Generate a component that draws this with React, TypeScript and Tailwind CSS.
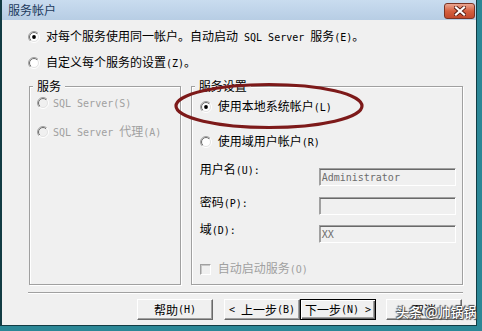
import React from "react";

function T({ s }: { s: string }) {
  const parts = s.match(/[\x00-\x7f]+|[^\x00-\x7f]+/g) || [];
  return (
    <>
      {parts.map((p, i) =>
        /[\x00-\x7f]/.test(p[0]) ? (
          <span key={i} className="font-['DejaVu_Sans_Mono',monospace] text-[10px]">
            {p}
          </span>
        ) : (
          <span key={i}>{p}</span>
        )
      )}
    </>
  );
}

function Radio({ checked, disabled }: { checked?: boolean; disabled?: boolean }) {
  return (
    <svg width="12" height="12" viewBox="0 0 12 12" className="shrink-0">
      <defs>
        <linearGradient id="rOuter" x1="0" y1="0" x2="1" y2="1">
          <stop offset="0.5" stopColor="#a0a0a0" />
          <stop offset="0.5" stopColor="#ffffff" />
        </linearGradient>
        <linearGradient id="rInner" x1="0" y1="0" x2="1" y2="1">
          <stop offset="0.5" stopColor="#696969" />
          <stop offset="0.5" stopColor="#e3e3e3" />
        </linearGradient>
      </defs>
      <circle cx="6" cy="6" r="5.5" fill="none" stroke="url(#rOuter)" strokeWidth="1" />
      <circle cx="6" cy="6" r="4.5" fill={disabled ? "#f0f0f0" : "#ffffff"} stroke="url(#rInner)" strokeWidth="1" />
      {checked && <circle cx="6" cy="6" r="1.9" fill="#000" />}
    </svg>
  );
}

function Btn({ label, def }: { label: React.ReactNode; def?: boolean }) {
  return (
    <div
      className={
        def
          ? "w-[76px] h-[21px] bg-[#f0f0f0] border border-black shadow-[inset_1px_1px_0_#fff,inset_-1px_-1px_0_#696969,inset_-2px_-2px_0_#a0a0a0] flex items-center justify-center whitespace-pre"
          : "w-[76px] h-[21px] bg-[#f0f0f0] border border-t-white border-l-white border-r-[#696969] border-b-[#696969] shadow-[inset_-1px_-1px_0_#a0a0a0] flex items-center justify-center whitespace-pre"
      }
    >
      {label}
    </div>
  );
}

function Box({ text }: { text?: string }) {
  return (
    <div className="w-[137px] h-[18px] bg-[#f0f0f0] border border-t-[#a0a0a0] border-l-[#a0a0a0] border-r-white border-b-white shadow-[inset_0_1px_0_#696969,inset_1px_0_0_#a0a0a0] flex items-center pl-[2px] pt-[1px] font-['DejaVu_Sans_Mono',monospace] text-[10px] text-[#6d6d6d]">
      {text}
    </div>
  );
}

export default function App() {
  return (
    <div className="w-[482px] h-[331px] bg-[#2b8796] relative overflow-hidden font-['Noto_Sans_CJK_SC',sans-serif] text-[12px] leading-[14px] text-black">
      <div className="w-[477px] h-[326px] border-l-2 border-r border-b border-[#123c44] bg-[#f0f0f0] flex flex-col">
        {/* title bar */}
        <div className="h-[20px] shrink-0 flex items-center justify-between pl-[6px] pr-[1px] bg-gradient-to-b from-[#c9dcef] to-[#b7cde4]">
          <span className="text-[#1d3a5c] text-[12px] leading-[14px]">服务帐户</span>
          <div className="w-[31px] h-[16px] mt-[1px] rounded-[3px] border border-[#7a3424] bg-gradient-to-b from-[#eaa591] via-[#d5603f] to-[#c2492c] flex items-center justify-center">
            <svg width="12" height="10" viewBox="0 0 12 10">
              <path d="M2 1.5 L10 8.5 M10 1.5 L2 8.5" stroke="#5a1e14" strokeWidth="4" strokeLinecap="square" />
              <path d="M2 1.5 L10 8.5 M10 1.5 L2 8.5" stroke="#ffffff" strokeWidth="2.2" strokeLinecap="square" />
            </svg>
          </div>
        </div>

        {/* content */}
        <div className="flex-1 flex flex-col pl-[27px] pr-[13px]">
          <div className="mt-[9px] h-[16px] flex items-center gap-[6px] -ml-[1px] whitespace-pre">
            <Radio checked />
            <span>
              <T s="对每个服务使用同一帐户。自动启动 SQL Server 服务(E)。" />
            </span>
          </div>
          <div className="mt-[10px] h-[16px] flex items-center gap-[6px] -ml-[1px] whitespace-pre">
            <Radio />
            <span>
              <T s="自定义每个服务的设置(Z)。" />
            </span>
          </div>

          <div className="mt-[8px] flex gap-[10px]">
            <fieldset className="w-[152px] h-[206px] min-w-0 border border-[#a0a0a0] shadow-[inset_1px_1px_0_#fff,1px_1px_0_#fff] p-0 m-0">
              <legend className="ml-[3px] px-[4px] bg-[#f0f0f0]">服务</legend>
              <div className="pl-[7px] flex flex-col text-[#a0a0a0] whitespace-pre">
                <div className="mt-[2px] h-[16px] flex items-center gap-[4px]">
                  <Radio disabled />
                  <span>
                    <T s="SQL Server(S)" />
                  </span>
                </div>
                <div className="mt-[13px] h-[16px] flex items-center gap-[4px]">
                  <Radio disabled />
                  <span>
                    <T s="SQL Server 代理(A)" />
                  </span>
                </div>
              </div>
            </fieldset>

            <fieldset className="w-[273px] h-[206px] min-w-0 border border-[#a0a0a0] shadow-[inset_1px_1px_0_#fff,1px_1px_0_#fff] p-0 m-0">
              <legend className="ml-[3px] px-[4px] bg-[#f0f0f0]">服务设置</legend>
              <div className="pl-[8px] flex flex-col whitespace-pre">
                <div className="mt-[6px] h-[16px] flex items-center gap-[6px]">
                  <Radio checked />
                  <span>
                    <T s="使用本地系统帐户(L)" />
                  </span>
                </div>
                <div className="mt-[19px] h-[16px] flex items-center gap-[6px]">
                  <Radio />
                  <span>
                    <T s="使用域用户帐户(R)" />
                  </span>
                </div>

                <div className="mt-[18px] flex items-start">
                  <span className="w-[119px] -mt-[6px]">
                    <T s="用户名(U):" />
                  </span>
                  <Box text="Administrator" />
                </div>
                <div className="mt-[11px] flex items-start">
                  <span className="w-[119px] -mt-[2px]">
                    <T s="密码(P):" />
                  </span>
                  <Box />
                </div>
                <div className="mt-[10px] flex items-start">
                  <span className="w-[119px] -mt-[3px]">
                    <T s="域(D):" />
                  </span>
                  <Box text="XX" />
                </div>

                <div className="mt-[18px] h-[16px] flex items-center gap-[7px] text-[#a0a0a0]">
                  <div className="w-[11px] h-[11px] border border-t-[#a0a0a0] border-l-[#a0a0a0] border-r-white border-b-white shadow-[inset_1px_1px_0_#c8c8c8] bg-[#f0f0f0]" />
                  <span>
                    <T s="自动启动服务(O)" />
                  </span>
                </div>
              </div>
            </fieldset>
          </div>

          <div className="mt-[7px] -ml-[1px] h-[2px] border-t border-[#a0a0a0] border-b border-b-white" />

          <div className="mt-[5px] flex justify-end pr-[1px]">
            <Btn label={<T s="帮助(H)" />} />
            <div className="ml-[11px] flex">
              <Btn label={<T s="< 上一步(B)" />} />
              <Btn def label={<T s="下一步(N) >" />} />
            </div>
            <div className="ml-[10px]">
              <Btn label={<T s="取消" />} />
            </div>
          </div>
        </div>
      </div>

      {/* red annotation ellipse */}
      <svg className="absolute left-0 top-0 pointer-events-none" width="482" height="331">
        <ellipse cx="269" cy="106" rx="93" ry="21.5" fill="none" stroke="#7d1a1a" strokeWidth="3.2" />
      </svg>

      {/* watermark */}
      <div className="absolute left-[396px] top-[304px] text-[13px] leading-[16px] text-white font-medium [text-shadow:0_0_1px_#333,1px_1px_1px_#444,-1px_-1px_1px_#444] whitespace-pre">
        头条 @帅锅锅
      </div>
    </div>
  );
}
